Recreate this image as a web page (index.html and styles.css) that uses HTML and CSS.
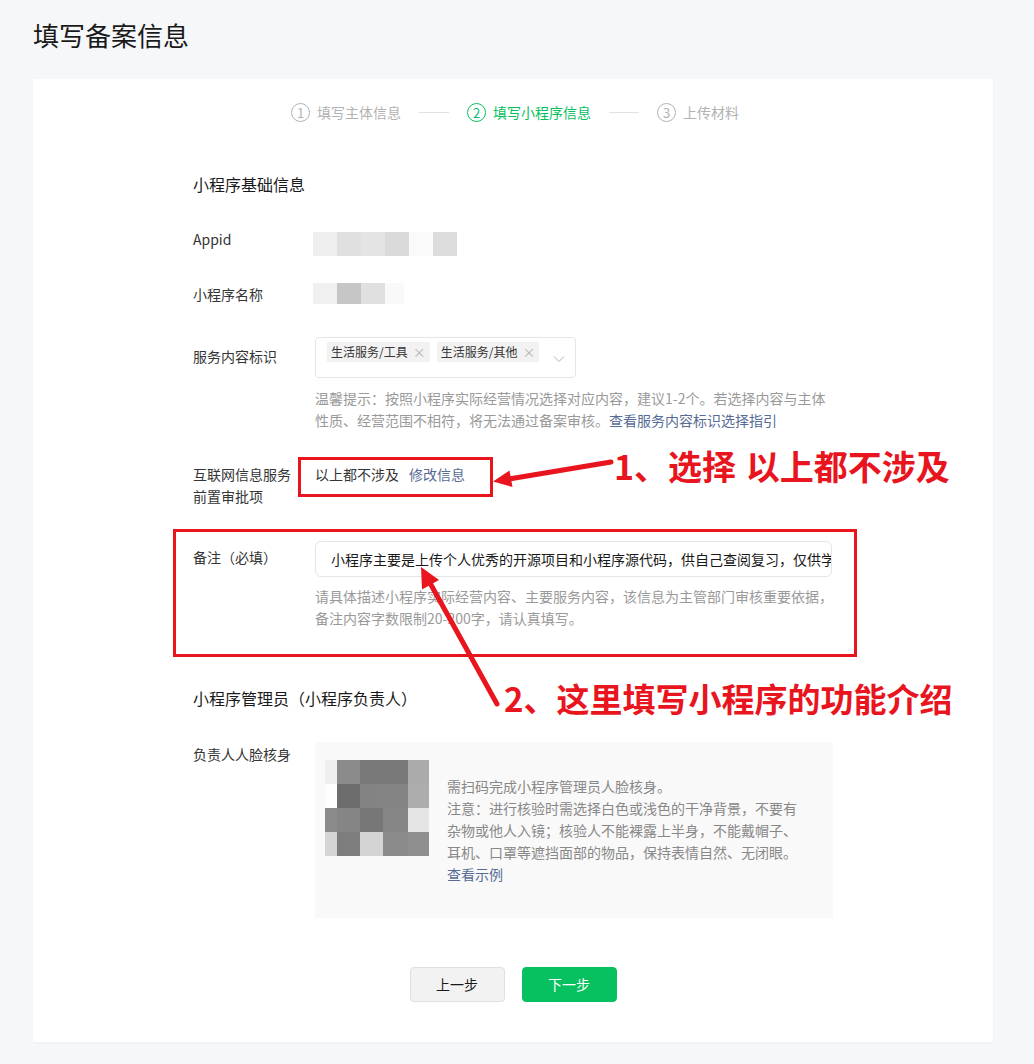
FILE: index.html
```html
<!DOCTYPE html>
<html lang="zh-CN">
<head>
<meta charset="utf-8">
<title>填写备案信息</title>
<link rel="stylesheet" href="styles.css">
</head>
<body>
<h1 class="page-title">填写备案信息</h1>
<div class="card">
  <ol class="steps">
    <li class="step"><span class="step-num">1</span><span class="step-text">填写主体信息</span></li>
    <li class="step-line"></li>
    <li class="step active"><span class="step-num">2</span><span class="step-text">填写小程序信息</span></li>
    <li class="step-line"></li>
    <li class="step"><span class="step-num">3</span><span class="step-text">上传材料</span></li>
  </ol>

  <div class="form">
    <h2 class="section-title">小程序基础信息</h2>

    <div class="row row-appid">
      <div class="label">Appid</div>
      <div class="value">
        <div class="mosaic mosaic-appid">
          <span class="c-ef"></span><span class="c-e0"></span><span class="c-e4"></span><span class="c-da"></span><span class="c-fa"></span><span class="c-dc"></span>
        </div>
      </div>
    </div>

    <div class="row row-name">
      <div class="label">小程序名称</div>
      <div class="value">
        <div class="mosaic mosaic-name">
          <span class="c-f0"></span><span class="c-c6"></span><span class="c-e0"></span><span class="c-f9 narrow"></span>
        </div>
      </div>
    </div>

    <div class="row row-service">
      <div class="label label-pad8">服务内容标识</div>
      <div class="value">
        <div class="select">
          <div class="tags">
            <span class="tag">生活服务/工具<span class="tag-close">×</span></span>
            <span class="tag">生活服务/其他<span class="tag-close">×</span></span>
          </div>
          <svg class="chevron" width="12" height="8" viewBox="0 0 12 8"><polyline points="1,1.5 6,6.5 11,1.5" fill="none" stroke="#b2b2b2" stroke-width="1"/></svg>
        </div>
        <p class="hint hint-service">温馨提示：按照小程序实际经营情况选择对应内容，建议1-2个。若选择内容与主体性质、经营范围不相符，将无法通过备案审核。<a class="link">查看服务内容标识选择指引</a></p>
      </div>
    </div>

    <div class="row row-icp">
      <div class="label">互联网信息服务前置审批项</div>
      <div class="value">
        <span class="plain">以上都不涉及</span><a class="link link-edit">修改信息</a>
      </div>
    </div>

    <div class="row row-remark">
      <div class="label label-pad5">备注（必填）</div>
      <div class="value">
        <div class="input">小程序主要是上传个人优秀的开源项目和小程序源代码，供自己查阅复习，仅供学习交流使用</div>
        <p class="hint hint-remark">请具体描述小程序实际经营内容、主要服务内容，该信息为主管部门审核重要依据，备注内容字数限制20-200字，请认真填写。</p>
      </div>
    </div>

    <h2 class="section-title section-admin">小程序管理员（小程序负责人）</h2>

    <div class="row row-face">
      <div class="label label-pad1">负责人人脸核身</div>
      <div class="value">
        <div class="face-box">
          <div class="qr">
            <span class="c-ef"></span><span class="c-8b"></span><span class="c-78"></span><span class="c-79"></span><span class="c-ab"></span>
            <span class="c-fe"></span><span class="c-6d"></span><span class="c-83"></span><span class="c-84"></span><span class="c-ad"></span>
            <span class="c-8b"></span><span class="c-85"></span><span class="c-77"></span><span class="c-86"></span><span class="c-e5"></span>
            <span class="c-d5"></span><span class="c-7d"></span><span class="c-d4"></span><span class="c-8b"></span><span class="c-8f"></span>
          </div>
          <div class="face-text">
            <p>需扫码完成小程序管理员人脸核身。</p>
            <p>注意：进行核验时需选择白色或浅色的干净背景，不要有杂物或他人入镜；核验人不能裸露上半身，不能戴帽子、耳机、口罩等遮挡面部的物品，保持表情自然、无闭眼。</p>
            <p><a class="link">查看示例</a></p>
          </div>
        </div>
      </div>
    </div>
  </div>

  <div class="actions">
    <button class="btn btn-default">上一步</button>
    <button class="btn btn-primary">下一步</button>
  </div>
</div>

<div class="annotations">
  <div class="mark mark-1"></div>
  <div class="mark mark-2"></div>
  <div class="note note-1">1、选择 以上都不涉及</div>
  <div class="note note-2">2、这里填写小程序的功能介绍</div>
  <svg class="arrows" width="1034" height="1064" viewBox="0 0 1034 1064">
    <line x1="611" y1="462" x2="509" y2="479" stroke="#e8151f" stroke-width="5" stroke-linecap="round"/>
    <polygon points="493,481.5 509.5,470.5 512.5,487" fill="#e8151f"/>
    <line x1="497" y1="704" x2="430" y2="583" stroke="#e8151f" stroke-width="5" stroke-linecap="round"/>
    <polygon points="421,567 439,580 422,589.5" fill="#e8151f"/>
  </svg>
</div>
</body>
</html>
```

FILE: styles.css
```css
* { box-sizing: border-box; }

html, body {
  margin: 0;
  padding: 0;
}

body {
  position: relative;
  width: 1034px;
  min-height: 1064px;
  background: #f6f7f9;
  font-family: "Noto Sans CJK SC", "Noto Sans", "Liberation Sans", sans-serif;
  font-size: 14px;
  line-height: 22px;
  color: #353535;
}

.page-title {
  margin: 0;
  padding: 20px 0 0 33px;
  font-size: 26px;
  line-height: 30px;
  font-weight: 400;
  color: #1a1a1a;
}

.card {
  width: 960px;
  margin: 29px 0 0 33px;
  padding: 21px 0 40px;
  background: #fff;
  box-shadow: 0 1px 2px rgba(0, 0, 0, 0.04);
}

/* steps */
.steps {
  display: flex;
  justify-content: center;
  align-items: center;
  gap: 18px;
  height: 24px;
  margin: 0;
  padding: 0 0 0 4px;
  list-style: none;
}

.step {
  display: flex;
  align-items: center;
  gap: 7px;
  color: #b2b2b2;
  font-size: 14px;
}

.step-num {
  width: 19px;
  height: 19px;
  border: 1px solid #b2b2b2;
  border-radius: 50%;
  font-size: 13px;
  line-height: 17px;
  text-align: center;
}

.step.active { color: #07c160; }
.step.active .step-num { border-color: #07c160; }

.step-line {
  width: 30px;
  height: 1px;
  background: #e2e2e2;
}

/* form */
.form {
  padding-left: 160px;
  margin-top: 48px;
}

.section-title {
  margin: 0;
  font-size: 16px;
  line-height: 24px;
  font-weight: 400;
  color: #1a1a1a;
}

.section-admin { margin-top: 57px; }

.row {
  display: flex;
  align-items: flex-start;
}

.label {
  width: 100px;
  margin-right: 22px;
  flex-shrink: 0;
  color: #353535;
}

.label-pad8 { padding-top: 8px; }
.label-pad5 { padding-top: 5px; }
.label-pad1 { padding-top: 1px; }

.value {
  width: 518px;
}

.row-appid { margin-top: 32px; }
.row-name { margin-top: 27px; }
.row-service { margin-top: 32px; }
.row-icp { margin-top: 32px; }
.row-remark { margin-top: 34px; }
.row-face { margin-top: 32px; }

/* mosaics */
.mosaic { display: flex; margin-left: -2px; }
.mosaic span { width: 24px; }
.mosaic-appid { margin-top: 4px; height: 24px; }
.mosaic-name { height: 21px; }
.mosaic .narrow { width: 19px; }

.c-ef { background: #efefef; }
.c-e0 { background: #e0e0e0; }
.c-e4 { background: #e4e4e4; }
.c-da { background: #dadada; }
.c-fa { background: #fafafa; }
.c-dc { background: #dcdcdc; }
.c-f0 { background: #f0f0f0; }
.c-c6 { background: #c6c6c6; }
.c-f9 { background: #f9f9f9; }
.c-8b { background: #8b8b8b; }
.c-78 { background: #787878; }
.c-79 { background: #797979; }
.c-ab { background: #ababab; }
.c-fe { background: #fefefe; }
.c-6d { background: #6d6d6d; }
.c-83 { background: #838383; }
.c-84 { background: #848484; }
.c-ad { background: #adadad; }
.c-85 { background: #858585; }
.c-77 { background: #777777; }
.c-86 { background: #868686; }
.c-e5 { background: #e5e5e5; }
.c-d5 { background: #d5d5d5; }
.c-7d { background: #7d7d7d; }
.c-d4 { background: #d4d4d4; }
.c-8f { background: #8f8f8f; }

/* select */
.select {
  display: flex;
  justify-content: space-between;
  width: 261px;
  height: 41px;
  padding: 4px 10px 0 11px;
  border: 1px solid #e5e5e5;
  border-radius: 4px;
}

.tags {
  display: flex;
  gap: 7px;
  align-items: flex-start;
}

.tag {
  display: flex;
  align-items: center;
  height: 20px;
  padding: 0 4px;
  background: #f2f2f2;
  font-size: 12px;
  line-height: 20px;
  color: #353535;
  white-space: nowrap;
}

.tag-close {
  margin-left: 5px;
  color: #b2b2b2;
  font-size: 13px;
}

.chevron { margin-top: 13px; }

.hint {
  margin: 9px 0 0;
  color: #9a9a9a;
  font-size: 14px;
  line-height: 22px;
}

.hint-service { width: 520px; }
.hint-remark { width: 530px; margin-top: 8px; }

.link {
  color: #576b95;
  text-decoration: none;
}

.plain { color: #353535; }
.link-edit { margin-left: 10px; }

/* input */
.input {
  width: 517px;
  height: 36px;
  padding: 0 15px;
  border: 1px solid #e5e5e5;
  border-radius: 6px;
  line-height: 34px;
  color: #191919;
  white-space: nowrap;
  overflow: hidden;
}

/* face box */
.face-box {
  display: flex;
  align-items: flex-start;
  width: 518px;
  height: 176px;
  padding: 18px 0 0 10px;
  background: #f9f9f9;
}

.qr {
  display: grid;
  grid-template-columns: 12px 23px 23px 25px 21px;
  grid-template-rows: repeat(4, 24px);
  flex-shrink: 0;
  margin-right: 18px;
}

.face-text {
  width: 356px;
  margin-top: 15px;
  color: #888;
}

.face-text p { margin: 0; }

/* actions */
.actions {
  display: flex;
  justify-content: center;
  gap: 17px;
  margin-top: 49px;
}

.btn {
  width: 95px;
  height: 35px;
  border-radius: 4px;
  font-family: inherit;
  font-size: 14px;
  line-height: 33px;
  padding: 0;
  cursor: pointer;
}

.btn-default {
  background: #f2f2f2;
  border: 1px solid #e0e0e0;
  color: #1a1a1a;
}

.btn-primary {
  background: #07c160;
  border: 1px solid #07c160;
  color: #fff;
}

/* annotations overlay */
.annotations {
  position: absolute;
  top: 0;
  left: 0;
  width: 1034px;
  height: 1064px;
  pointer-events: none;
}

.mark {
  position: absolute;
  border: 3px solid #e8151f;
}

.mark-1 { left: 298px; top: 457px; width: 195px; height: 40px; }
.mark-2 { left: 173px; top: 529px; width: 684px; height: 128px; }

.note {
  position: absolute;
  font-size: 33px;
  line-height: 40px;
  font-weight: 700;
  color: #e8151f;
  white-space: nowrap;
}

.note-1 { left: 614px; top: 446px; font-size: 34px; word-spacing: 2px; }
.note-2 { left: 504px; top: 678px; }

.arrows {
  position: absolute;
  top: 0;
  left: 0;
}
```
